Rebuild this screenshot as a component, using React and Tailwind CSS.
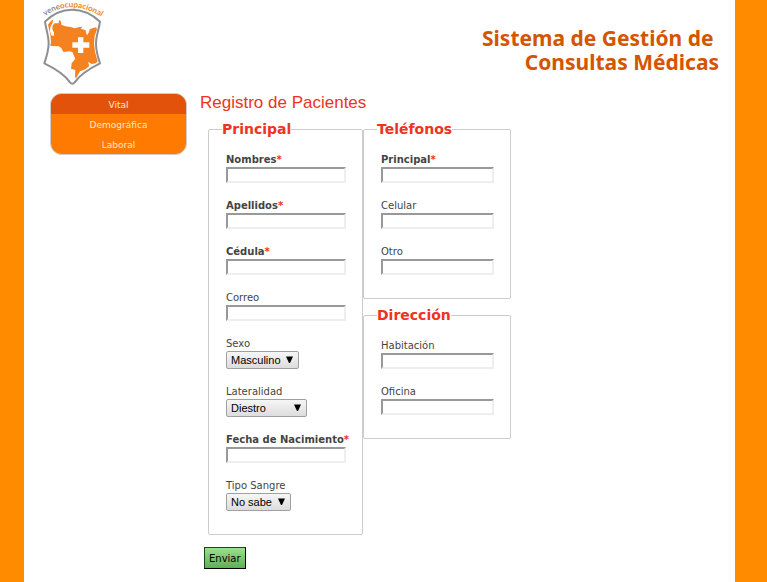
import React from "react";

function Logo() {
  return (
    <svg viewBox="114 0 210 270" className="block h-[90px] w-[70px] overflow-visible" role="img" aria-label="veneocupacional">
      <path
        d="M135 65 C158 42 188 29 216 29 C246 29 276 42 300 65 C297 88 288 108 288 130 C288 152 293 170 300 190 C272 204 242 220 224 247 Q217 255 210 247 C192 220 162 204 133 190 C140 170 146 152 146 130 C146 108 138 88 135 65 Z"
        fill="#fff"
        stroke="#8d8f92"
        strokeWidth="6"
        strokeLinejoin="round"
      />
      <path
        d="M144 74 L152 64 L160 58 L157 70 L151 82 L150 94 L154 106 L161 108 L162 98 L157 88 L158 76 L164 70 L176 70 L177 60 L183 64 L184 74 L196 79 L212 81 L224 85 L236 82 L248 80 L242 86 L256 90 L261 106 L266 98 L270 87 L288 82 L291 88 L284 108 L282 130 L285 155 L293 184 L287 190 L276 192 L264 186 L268 198 L256 208 L240 214 L228 235 L225 231 L226 210 L213 206 L215 190 L226 176 L217 156 L208 154 L190 156 L184 144 L176 139 L151 138 L153 126 L151 104 Z"
        fill="#f58220"
      />
      <path d="M234 112 H250 V127 H268 V143 H250 V159 H234 V143 H217 V127 H234 Z" fill="#fff" />
      <path id="logo-arc" d="M135 48 Q218 -9 316 58" fill="none" />
      <text fontFamily="Lato, sans-serif" fontSize="24" fontWeight="700" fill="#8d8f92">
        <textPath href="#logo-arc">
          vene<tspan fill="#f58220">ocupacional</tspan>
        </textPath>
      </text>
    </svg>
  );
}

function Label({ id, required, children }) {
  return (
    <label htmlFor={id} className={"block text-[10px] leading-[14px] whitespace-nowrap " + (required ? "font-bold" : "")}>
      {children}
      {required && <span className="text-[#ee3322]">*</span>}
    </label>
  );
}

function TextField({ id, label, required }) {
  return (
    <div className="mb-4">
      <Label id={id} required={required}>{label}</Label>
      <input
        id={id}
        type="text"
        className="block h-4 w-full border-2 border-t-[#999] border-r-[#eee] border-b-[#eee] border-l-[#999] bg-white px-1 text-[10px] outline-none"
      />
    </div>
  );
}

function SelectField({ id, label, options, width }) {
  return (
    <div className="mb-4">
      <Label id={id}>{label}</Label>
      <div className={"relative " + width}>
        <select
          id={id}
          className="block h-[18px] w-full appearance-none rounded-xs border border-[#a0a0a0] bg-linear-to-b from-[#f6f6f6] to-[#dddddd] pl-1 font-['Liberation_Sans',Arial,sans-serif] text-[11px] leading-4 text-black"
        >
          {options.map((o) => (
            <option key={o}>{o}</option>
          ))}
        </select>
        <svg viewBox="0 0 7 7" className="pointer-events-none absolute top-[5px] right-[6px] size-[7px]" aria-hidden="true">
          <path d="M0 0.5 H7 L4 7 H3 Z" fill="#000" />
        </svg>
      </div>
    </div>
  );
}

function Group({ title, width, children }) {
  return (
    <fieldset className="rounded-xs border border-[#ccc] pr-4 pb-[7px] pl-[17px]">
      <legend className="-ml-1 text-[14px] leading-[17px] font-bold text-[#ee3322]">{title}</legend>
      <div className={"pt-[15px] " + width}>{children}</div>
    </fieldset>
  );
}

export default function App() {
  return (
    <div className="flex min-h-screen bg-[#ff8c00] pr-8 pl-6 font-['DejaVu_Sans',Verdana,sans-serif] text-[#444]">
      <div className="min-w-0 flex-1 bg-white">
        <header className="flex items-start justify-between pr-4 pl-[14px]">
          <Logo />
          <h1 className="pt-[26px] text-right font-['Noto_Sans','Open_Sans',sans-serif] text-[21px] leading-6 font-bold text-[#d45500]">
            Sistema de Gestión de&nbsp;
            <br />
            Consultas Médicas
          </h1>
        </header>
        <div className="flex items-start pt-[3px] pl-[26px]">
          <nav className="w-[137px] overflow-hidden rounded-xl border border-[#ccc] bg-[#ff7a00] text-center text-[9px] leading-[18px] text-[#ffe9c4]">
            <a href="#vital" className="block bg-[#e2520b] pt-[2px]">Vital</a>
            <a href="#demografica" className="block pt-[2px]">Demográfica</a>
            <a href="#laboral" className="block pt-[2px]">Laboral</a>
          </nav>
          <main className="pl-[13px]">
            <h2 className="font-['Liberation_Sans',Arial,sans-serif] text-[17px] leading-5 text-[#ee3322]">Registro de Pacientes</h2>
            <form className="pt-2" onSubmit={(e) => e.preventDefault()}>
              <div className="flex items-start pl-2">
                <Group title="Principal" width="w-[120px]">
                  <TextField id="nombres" label="Nombres" required />
                  <TextField id="apellidos" label="Apellidos" required />
                  <TextField id="cedula" label="Cédula" required />
                  <TextField id="correo" label="Correo" />
                  <SelectField id="sexo" label="Sexo" options={["Masculino", "Femenino"]} width="w-[73px]" />
                  <SelectField id="lateralidad" label="Lateralidad" options={["Diestro", "Zurdo", "Ambidiestro"]} width="w-[81px]" />
                  <TextField id="fecha" label="Fecha de Nacimiento" required />
                  <SelectField id="sangre" label="Tipo Sangre" options={["No sabe", "A+", "O+"]} width="w-[65px]" />
                </Group>
                <div className="flex flex-col gap-2">
                  <Group title="Teléfonos" width="w-[113px]">
                    <TextField id="tel-principal" label="Principal" required />
                    <TextField id="celular" label="Celular" />
                    <TextField id="otro" label="Otro" />
                  </Group>
                  <Group title="Dirección" width="w-[113px]">
                    <TextField id="habitacion" label="Habitación" />
                    <TextField id="oficina" label="Oficina" />
                  </Group>
                </div>
              </div>
              <button
                type="submit"
                className="mt-3 ml-1 block h-[22px] border border-t-[#1c441c] border-r-black border-b-black border-l-[#1c441c] bg-linear-to-b from-[#99e28c] to-[#5fae57] px-1 text-[10px] text-black"
              >
                Enviar
              </button>
            </form>
          </main>
        </div>
      </div>
    </div>
  );
}
